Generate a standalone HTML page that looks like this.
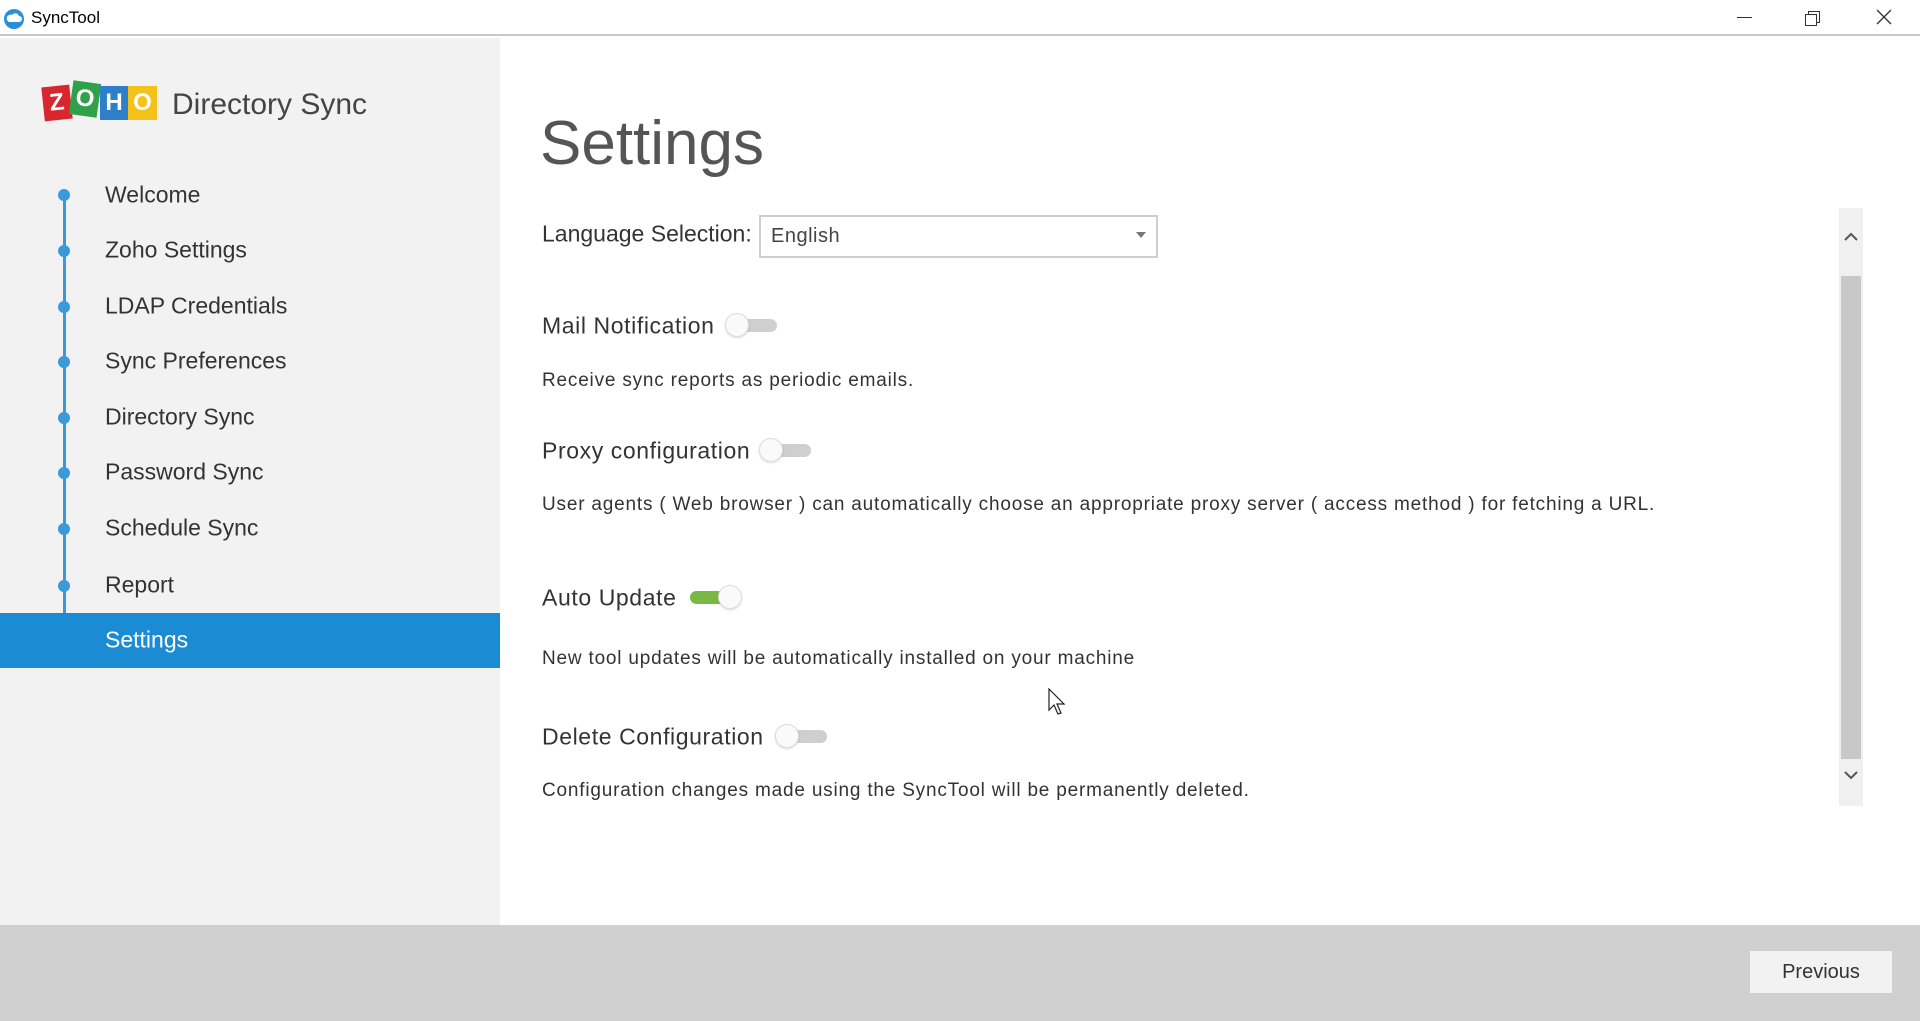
<!DOCTYPE html>
<html><head><meta charset="utf-8"><style>
*{margin:0;padding:0;box-sizing:border-box}
body{width:1920px;height:1021px;position:relative;overflow:hidden;background:#fff;font-family:"Liberation Sans",sans-serif;color:#333}
.a{position:absolute;white-space:nowrap}
.nav{position:absolute;left:105px;font-size:23px;color:#333;transform:translateY(-50%)}
.dot{position:absolute;left:58px;width:12px;height:12px;border-radius:50%;background:#3a9ad9;transform:translateY(-50%)}
.lbl{position:absolute;left:542px;font-size:23px;color:#333;transform:translateY(-50%);letter-spacing:0.6px}
.desc{position:absolute;left:542px;font-size:19px;color:#333;transform:translateY(-50%);letter-spacing:0.8px}
.tg{position:absolute;width:54px;height:26px;transform:translateY(-50%)}
.tg .tr{position:absolute;left:6px;right:2px;top:7px;height:13px;border-radius:7px;background:#cfcfcf}
.tg .kn{position:absolute;left:0;top:1px;width:24px;height:24px;border-radius:50%;background:#fafafa;border:1px solid #ddd;box-shadow:0 1px 2px rgba(0,0,0,.15)}
.tg.on .tr{background:#7ab845;left:2px;right:8px}
.tg.on .kn{left:auto;right:0}
</style></head><body>
<div class="a" style="left:0;top:0;width:1920px;height:36px;background:#fff;border-bottom:2px solid #c8c8c8"></div>
<svg class="a" style="left:3px;top:8px" width="22" height="22" viewBox="0 0 22 22"><circle cx="11" cy="11" r="10" fill="#2a8fd4"/><path d="M6 14h10a3 3 0 0 0 0-6 4 4 0 0 0-7-1 3 3 0 0 0-3 7z" fill="#fff"/></svg>
<div class="a" style="left:31px;top:8px;font-size:17px;color:#000">SyncTool</div>
<div class="a" style="left:1737px;top:17px;width:15px;height:1px;background:#333"></div>
<div class="a" style="left:1808px;top:11px;width:12px;height:12px;border:1px solid #333"></div>
<div class="a" style="left:1805px;top:14px;width:12px;height:12px;border:1px solid #333;background:#fff"></div>
<svg class="a" style="left:1876px;top:9px" width="16" height="16"><path d="M1 1L15 15M15 1L1 15" stroke="#333" stroke-width="1.3"/></svg>
<div class="a" style="left:0;top:38px;width:500px;height:887px;background:#f2f2f2"></div>
<div class="a" style="left:43px;top:82px;width:114px;height:40px">
 <div class="a" style="left:0;top:4px;width:28px;height:34px;background:#d8262f;transform:rotate(-6deg);color:#fff;font:bold 24px 'Liberation Sans';text-align:center;line-height:34px">Z</div>
 <div class="a" style="left:28px;top:0;width:28px;height:34px;background:#2fa14a;transform:rotate(8deg);color:#fff;font:bold 24px 'Liberation Sans';text-align:center;line-height:34px">O</div>
 <div class="a" style="left:57px;top:4px;width:28px;height:34px;background:#2c7fc8;color:#fff;font:bold 24px 'Liberation Sans';text-align:center;line-height:34px">H</div>
 <div class="a" style="left:85px;top:4px;width:29px;height:34px;background:#f5c21b;color:#fff;font:bold 24px 'Liberation Sans';text-align:center;line-height:34px">O</div>
</div>
<div class="a" style="left:172px;top:88px;font-size:30px;color:#444">Directory Sync</div>
<div class="a" style="left:63px;top:195px;width:3px;height:418px;background:#3a9ad9"></div>
<div class="dot" style="top:195px"></div><div class="nav" style="top:195px">Welcome</div>
<div class="dot" style="top:251px"></div><div class="nav" style="top:250px">Zoho Settings</div>
<div class="dot" style="top:307px"></div><div class="nav" style="top:306px">LDAP Credentials</div>
<div class="dot" style="top:362px"></div><div class="nav" style="top:361px">Sync Preferences</div>
<div class="dot" style="top:418px"></div><div class="nav" style="top:417px">Directory Sync</div>
<div class="dot" style="top:473px"></div><div class="nav" style="top:472px">Password Sync</div>
<div class="dot" style="top:529px"></div><div class="nav" style="top:528px">Schedule Sync</div>
<div class="dot" style="top:586px"></div><div class="nav" style="top:585px">Report</div>
<div class="a" style="left:0;top:613px;width:500px;height:55px;background:#1b8bd3"></div>
<div class="nav" style="top:640px;color:#fff">Settings</div>
<div class="a" style="left:540px;top:108px;font-size:62px;color:#555">Settings</div>
<div class="lbl" style="top:234px;letter-spacing:0">Language Selection:</div>
<div class="a" style="left:759px;top:215px;width:399px;height:43px;border:2px solid #cfcfcf;background:#fff"></div>
<div class="a" style="left:771px;top:225px;font-size:20px;color:#444;letter-spacing:0.5px">English</div>
<div class="a" style="left:1136px;top:232px;width:0;height:0;border-left:5px solid transparent;border-right:5px solid transparent;border-top:6px solid #777"></div>

<div class="lbl" style="top:326px">Mail Notification</div>
<div class="tg" style="left:725px;top:325px"><div class="tr"></div><div class="kn"></div></div>
<div class="desc" style="top:381px">Receive sync reports as periodic emails.</div>

<div class="lbl" style="top:451px">Proxy configuration</div>
<div class="tg" style="left:759px;top:450px"><div class="tr"></div><div class="kn"></div></div>
<div class="desc" style="top:505px">User agents ( Web browser ) can automatically choose an appropriate proxy server ( access method ) for fetching a URL.</div>

<div class="lbl" style="top:598px">Auto Update</div>
<div class="tg on" style="left:688px;top:597px"><div class="tr"></div><div class="kn"></div></div>
<div class="desc" style="top:659px">New tool updates will be automatically installed on your machine</div>

<div class="lbl" style="top:737px">Delete Configuration</div>
<div class="tg" style="left:775px;top:736px"><div class="tr"></div><div class="kn"></div></div>
<div class="desc" style="top:791px">Configuration changes made using the SyncTool will be permanently deleted.</div>

<svg class="a" style="left:1048px;top:688px" width="18" height="28" viewBox="0 0 18 28"><path d="M1 1V22L6 17L10 26L13 25L9 16H16Z" fill="#fff" stroke="#222" stroke-width="1.2"/></svg>
<div class="a" style="left:1839px;top:208px;width:24px;height:598px;background:#f0f0f0"></div>
<div class="a" style="left:1841px;top:276px;width:20px;height:483px;background:#c8c8c8"></div>
<svg class="a" style="left:1843px;top:231px" width="16" height="12"><path d="M2 9L8 3L14 9" fill="none" stroke="#555" stroke-width="2"/></svg>
<svg class="a" style="left:1843px;top:769px" width="16" height="12"><path d="M2 3L8 9L14 3" fill="none" stroke="#555" stroke-width="2"/></svg>
<div class="a" style="left:0;top:925px;width:1920px;height:96px;background:#d0d0d0"></div>
<div class="a" style="left:1750px;top:951px;width:142px;height:42px;background:#f2f2f2;font-size:20px;color:#333;text-align:center;line-height:42px">Previous</div>
</body></html>
